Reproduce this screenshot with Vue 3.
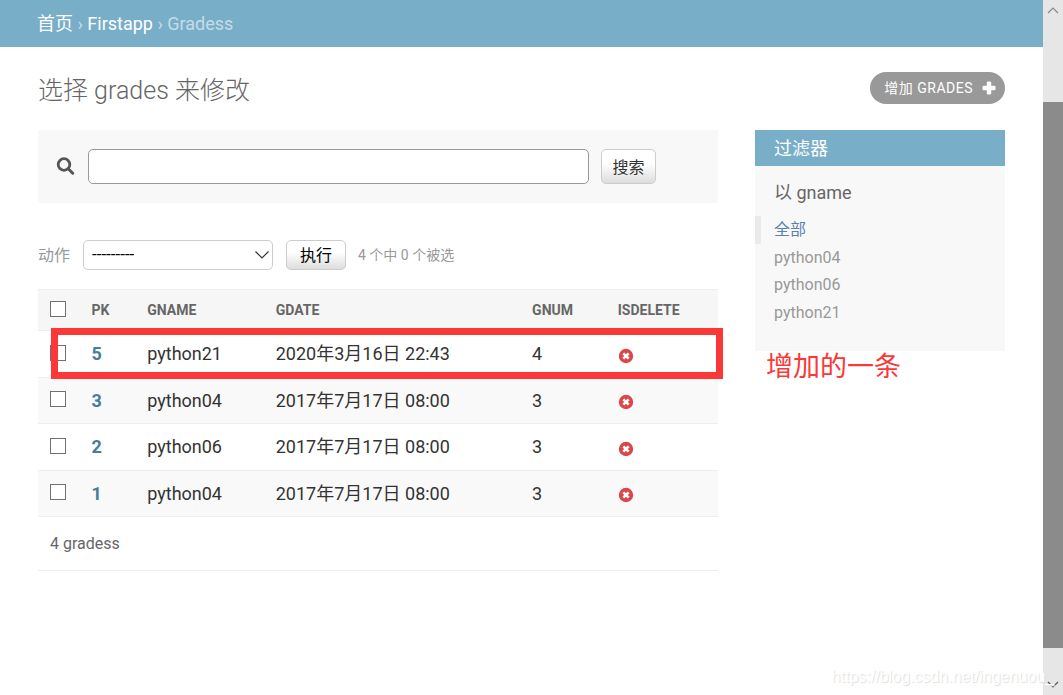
<script setup>
import { ref } from 'vue'

const query = ref('')
const action = ref('')
const headers = ['PK', 'GNAME', 'GDATE', 'GNUM', 'ISDELETE']
const rows = [
  { pk: 5, gname: 'python21', gdate: '2020年3月16日 22:43', gnum: 4, added: true },
  { pk: 3, gname: 'python04', gdate: '2017年7月17日 08:00', gnum: 3 },
  { pk: 2, gname: 'python06', gdate: '2017年7月17日 08:00', gnum: 3 },
  { pk: 1, gname: 'python04', gdate: '2017年7月17日 08:00', gnum: 3 },
]
const filters = ['全部', 'python04', 'python06', 'python21']
</script>

<template>
  <div class="window">
    <div class="page">
      <nav class="breadcrumbs" aria-label="breadcrumbs">
        <a href="#">首页</a> › <a href="#">Firstapp</a> › Gradess
      </nav>

      <main class="content">
        <header class="title-row">
          <h1>选择 grades 来修改</h1>
          <a class="add-link" href="#">
            <span>增加 GRADES</span>
            <svg width="14" height="14" viewBox="0 0 14 14" aria-hidden="true">
              <path d="M5.8 0.5h2.4q1 0 1 1v3.3h3.3q1 0 1 1v2.4q0 1-1 1H9.2v3.3q0 1-1 1H5.8q-1 0-1-1V9.200H1.500q-1 0-1-1V5.800q0-1 1-1h3.300V1.500q0-1 1-1z" fill="#fff" />
            </svg>
          </a>
        </header>

        <div class="columns">
          <section class="changelist">
            <form class="toolbar" @submit.prevent>
              <label for="searchbar" aria-label="搜索">
                <svg width="20" height="20" viewBox="0 0 20 20" aria-hidden="true">
                  <circle cx="8" cy="7.500" r="5.800" fill="none" stroke="#555" stroke-width="2.800" />
                  <path d="M12.500 12l4.200 4.200" stroke="#555" stroke-width="3" stroke-linecap="round" />
                </svg>
              </label>
              <input id="searchbar" v-model="query" type="text" />
              <button type="submit">搜索</button>
            </form>

            <form class="actions" @submit.prevent>
              <label for="action">动作</label>
              <span class="select">
                <select id="action" v-model="action">
                  <option value="">---------</option>
                </select>
                <svg width="16" height="10" viewBox="0 0 16 10" aria-hidden="true">
                  <path d="M1.500 1.500L8 8l6.500-6.500" fill="none" stroke="#333" stroke-width="1.200" />
                </svg>
              </span>
              <button type="submit">执行</button>
              <span class="counter">4 个中 0 个被选</span>
            </form>

            <table>
              <colgroup>
                <col class="c-check" /><col class="c-pk" /><col class="c-name" />
                <col class="c-date" /><col class="c-num" /><col />
              </colgroup>
              <thead>
                <tr>
                  <th scope="col"><input type="checkbox" aria-label="全选" /></th>
                  <th v-for="h in headers" :key="h" scope="col">{{ h }}</th>
                </tr>
              </thead>
              <tbody>
                <tr v-for="row in rows" :key="row.pk">
                  <td>
                    <input type="checkbox" :aria-label="`选择 ${row.pk}`" />
                    <span v-if="row.added" class="frame"></span>
                  </td>
                  <th scope="row"><a href="#">{{ row.pk }}</a></th>
                  <td>{{ row.gname }}</td>
                  <td>{{ row.gdate }}</td>
                  <td>{{ row.gnum }}</td>
                  <td>
                    <svg class="no" width="16" height="16" viewBox="0 0 16 16" role="img" aria-label="False">
                      <circle cx="8" cy="8" r="7.200" fill="#dd4646" />
                      <path d="M5.300 5.300l5.400 5.400M10.700 5.300l-5.400 5.400" stroke="#fff" stroke-width="2.600" />
                    </svg>
                  </td>
                </tr>
              </tbody>
            </table>
            <p class="paginator">4 gradess</p>
          </section>

          <aside class="filter">
            <h2>过滤器</h2>
            <h3>以 gname</h3>
            <ul>
              <li v-for="(f, i) in filters" :key="f" :class="{ selected: i === 0 }">
                <a href="#">{{ f }}</a>
              </li>
            </ul>
            <span class="note">增加的一条</span>
          </aside>
        </div>
      </main>
    </div>

    <div class="scrollbar" aria-hidden="true">
      <svg width="12" height="8" viewBox="0 0 12 8"><path d="M1 7l5-5 5 5" fill="none" stroke="#888" stroke-width="1.200" /></svg>
      <div class="track"><div class="thumb"></div></div>
      <svg width="12" height="8" viewBox="0 0 12 8"><path d="M1 1l5 5 5-5" fill="none" stroke="#555" stroke-width="1.200" /></svg>
    </div>
    <span class="watermark">https://blog.csdn.net/ingenuou_</span>
  </div>
</template>

<style>
body {
  margin: 0;
  background: #fff;
}
</style>

<style scoped>
* {
  box-sizing: border-box;
}
.window {
  position: relative;
  display: flex;
  min-height: 100vh;
  overflow: hidden;
  color: #333;
  font-family: Roboto, "Noto Sans CJK SC", sans-serif;
  font-size: 18px;
}
.page {
  flex: 1;
  min-width: 0;
}
a {
  text-decoration: none;
}
.breadcrumbs {
  padding: 12px 37px 11px;
  background: #79aec8;
  color: #c4dce8;
  line-height: 24px;
}
.breadcrumbs a {
  color: #fff;
}
.content {
  padding: 24px 38px;
}
.title-row {
  display: flex;
  justify-content: space-between;
  align-items: flex-start;
  height: 59px;
}
h1 {
  margin: 0;
  padding-top: 3px;
  color: #666;
  font-size: 25px;
  font-weight: 300;
  line-height: 34px;
}
.add-link {
  display: flex;
  align-items: center;
  gap: 9px;
  height: 32px;
  margin-top: 1px;
  padding: 0 9px 0 14px;
  border-radius: 16px;
  background: #999;
  color: #fff;
  font-size: 14px;
  line-height: 18px;
  letter-spacing: 0.5px;
}
.add-link span {
  padding-bottom: 1px;
}
.columns {
  display: flex;
  align-items: flex-start;
  gap: 37px;
}
.changelist {
  flex: 1;
  min-width: 0;
}
.toolbar {
  display: flex;
  align-items: center;
  height: 73px;
  padding: 0 62px 0 18px;
  background: #f8f8f8;
}
.toolbar label {
  display: flex;
  margin-right: 12px;
}
.toolbar input {
  flex: 1;
  min-width: 0;
  height: 35px;
  margin-right: 12px;
  padding: 2px 6px;
  border: 1px solid #999;
  border-radius: 5px;
  background: #fff;
  font: inherit;
}
button {
  padding: 0 0 2px;
  border: 1px solid #ccc;
  border-radius: 5px;
  background: linear-gradient(#fff 40%, #ddd);
  color: #333;
  font: inherit;
  font-size: 16px;
}
.toolbar button {
  width: 55px;
  height: 35px;
}
.actions {
  display: flex;
  align-items: center;
  height: 86px;
  padding-top: 18px;
  color: #999;
  font-size: 16px;
}
.actions > label,
.counter {
  padding-bottom: 2px;
}
.select {
  position: relative;
  display: flex;
  width: 190px;
  margin: 0 13px;
}
.select select {
  width: 100%;
  height: 30px;
  padding: 0 8px 2px;
  appearance: none;
  border: 1px solid #ccc;
  border-radius: 5px;
  background: #fff;
  color: #000;
  font: inherit;
  font-size: 17px;
}
.select svg {
  position: absolute;
  right: 3px;
  top: 10px;
  pointer-events: none;
}
.actions button {
  width: 60px;
  height: 30px;
  color: #000;
}
.counter {
  margin-left: 12px;
  font-size: 14px;
}
table {
  width: 100%;
  table-layout: fixed;
  border-collapse: collapse;
}
.c-check {
  width: 6.1%;
}
.c-pk {
  width: 8.2%;
}
.c-name {
  width: 18.9%;
}
.c-date {
  width: 37.7%;
}
.c-num {
  width: 12.6%;
}
th,
td {
  height: 46px;
  padding: 0 12px;
  border-bottom: 1px solid #eee;
  text-align: left;
  font-weight: 400;
  line-height: 24px;
  white-space: nowrap;
}
tbody tr:nth-child(odd) > * {
  height: 47px;
}
thead th {
  height: 41px;
  border-top: 1px solid #eee;
  background: #f6f6f6;
  color: #666;
  font-size: 14px;
  font-weight: 700;
}
tbody tr {
  position: relative;
}
tbody tr:nth-child(even) {
  background: #f9f9f9;
}
tbody th a {
  color: #447e9b;
  font-weight: 700;
}
input[type="checkbox"] {
  display: block;
  width: 16px;
  height: 16px;
  margin: 0 0 3px;
  appearance: none;
  border: 1px solid #707070;
  background: #fff;
}
.no {
  display: block;
  margin-top: 3px;
}
.frame {
  position: absolute;
  z-index: 1;
  inset: -3px -5px -1px 13px;
  border: 7px solid #fc3737;
  pointer-events: none;
}
.paginator {
  margin: 0;
  padding: 15px 12px 14px;
  border-bottom: 1px solid #eee;
  color: #666;
  font-size: 16px;
  line-height: 24px;
}
.filter {
  position: relative;
  width: 250px;
  padding-bottom: 25px;
  background: #f8f8f8;
}
.filter h2 {
  margin: 0;
  padding: 2px 19px 0;
  background: #79aec8;
  color: #fff;
  font-size: 18px;
  font-weight: 400;
  line-height: 34px;
}
.filter h3 {
  margin: 0;
  padding: 14px 19px 10px;
  color: #666;
  font-size: 18px;
  font-weight: 400;
  line-height: 26px;
}
.filter ul {
  margin: 0;
  padding: 0;
  list-style: none;
}
.filter li {
  padding-left: 13px;
  border-left: 6px solid transparent;
  font-size: 16px;
  line-height: 28px;
}
.filter li:nth-child(even) {
  line-height: 27px;
}
.filter li a {
  color: #999;
}
.filter li.selected {
  border-left-color: #eaeaea;
}
.filter li.selected a {
  color: #5b80b2;
}
.note {
  position: absolute;
  left: 11px;
  top: 100%;
  color: #fc3737;
  font-size: 27px;
  line-height: 32px;
  white-space: nowrap;
}
.scrollbar {
  display: flex;
  flex-direction: column;
  align-items: center;
  width: 20px;
  padding: 6px 0;
  background: #e6e6e6;
}
.track {
  display: flex;
  flex: 1;
  align-self: stretch;
  padding: 88px 0 33px;
}
.thumb {
  flex: 1;
  background: #8b8b8b;
}
.watermark {
  position: absolute;
  right: 9px;
  bottom: 8px;
  color: #fff;
  font-family: "Liberation Sans", Arial, sans-serif;
  font-size: 16px;
  line-height: 20px;
  text-shadow: 1px 1px 1px #ddd;
}
</style>
